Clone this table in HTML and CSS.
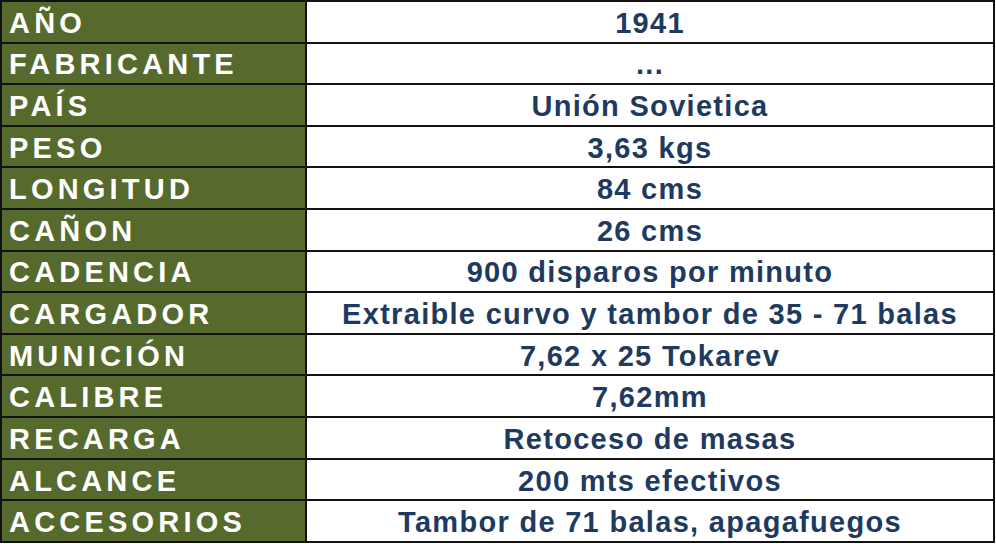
FILE: index.html
```html
<!DOCTYPE html>
<html lang="es">
<head>
<meta charset="utf-8">
<title>Ficha técnica</title>
<link rel="stylesheet" href="styles.css">
</head>
<body>
<table class="ficha">
  <tr><th>AÑO</th><td>1941</td></tr>
  <tr><th>FABRICANTE</th><td>...</td></tr>
  <tr><th>PAÍS</th><td>Unión Sovietica</td></tr>
  <tr><th>PESO</th><td>3,63 kgs</td></tr>
  <tr><th>LONGITUD</th><td>84 cms</td></tr>
  <tr><th>CAÑON</th><td>26 cms</td></tr>
  <tr><th>CADENCIA</th><td>900 disparos por minuto</td></tr>
  <tr><th>CARGADOR</th><td>Extraible curvo y tambor de 35 - 71 balas</td></tr>
  <tr><th>MUNICIÓN</th><td>7,62 x 25 Tokarev</td></tr>
  <tr><th>CALIBRE</th><td>7,62mm</td></tr>
  <tr><th>RECARGA</th><td>Retoceso de masas</td></tr>
  <tr><th>ALCANCE</th><td>200 mts efectivos</td></tr>
  <tr><th>ACCESORIOS</th><td>Tambor de 71 balas, apagafuegos</td></tr>
</table>
</body>
</html>
```
FILE: styles.css
```css
html, body {
  margin: 0;
  padding: 0;
  background: #ffffff;
}
.ficha {
  border-collapse: collapse;
  width: 995px;
  height: 543px;
  font-family: "Liberation Sans", Arial, sans-serif;
  font-weight: bold;
}
.ficha th,
.ficha td {
  border: 2px solid #111111;
  padding: 3px 0 0 0;
  height: 36px;
  line-height: 1;
  white-space: nowrap;
}
.ficha th {
  width: 296px;
  background: #566a2d;
  color: #ffffff;
  text-align: left;
  padding-left: 7px;
  font-size: 29px;
  letter-spacing: 4.2px;
}
.ficha td {
  color: #1e3a5f;
  text-align: center;
  font-size: 29px;
  letter-spacing: 1.3px;
}
```
